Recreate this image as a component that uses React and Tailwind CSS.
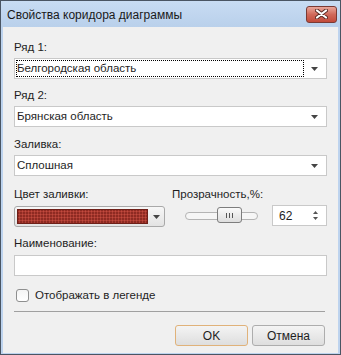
const Arrow = () => (
  <svg width="7" height="4" viewBox="0 0 7 4" className="shrink-0">
    <path d="M0 0h7L3.5 4z" fill="#444" />
  </svg>
);

const Combo = ({ text, focused }) => (
  <div className="h-[21px] bg-white border border-[#c9c9c9] flex items-center pl-[1px] pr-[8px]">
    <div
      className={`flex-1 h-[17px] flex items-center ${
        focused ? "border border-dotted border-black" : "border border-transparent"
      }`}
    >
      {text}
    </div>
    <div className="w-[14px] flex justify-end">
      <Arrow />
    </div>
  </div>
);

const Label = ({ children, className = "" }) => (
  <div className={`h-[16px] leading-[16px] text-[#1e1e1e] ${className}`}>{children}</div>
);

export default function App() {
  return (
    <div
      className="w-[341px] h-[355px] border border-[#4a5563] bg-[#bdd3ee] flex flex-col text-[11.5px] text-[#1e1e1e]"
      style={{ fontFamily: '"Liberation Sans", Arial, sans-serif' }}
    >
      {/* title bar */}
      <div className="h-[26px] shrink-0 flex items-center pl-[6px] pr-[3px] bg-gradient-to-b from-[#c8dcf3] to-[#b9d0eb]">
        <div className="flex-1 text-[12px] leading-none pt-[1px] text-[#1a1a1a]">Свойства коридора диаграммы</div>
        <div className="w-[31px] h-[17px] rounded-[3px] border border-[#7a3a34] bg-gradient-to-b from-[#e8a69a] via-[#d1695a] to-[#c24a3a] flex items-center justify-center">
          <svg width="13" height="10" viewBox="0 0 13 10">
            <path d="M2 1.5l9 7M11 1.5l-9 7" stroke="#5a2a24" strokeWidth="4" strokeLinecap="round" />
            <path d="M2 1.5l9 7M11 1.5l-9 7" stroke="#fff" strokeWidth="2.2" strokeLinecap="round" />
          </svg>
        </div>
      </div>

      {/* body */}
      <div className="flex-1 mx-[2px] mb-[1px] bg-[#f0f0f0] px-[11px] pt-[12px] flex flex-col">
        <Label>Ряд 1:</Label>
        <div className="mt-[3px]">
          <Combo text="Белгородская область" focused />
        </div>

        <Label className="mt-[8px]">Ряд 2:</Label>
        <div className="mt-[3px]">
          <Combo text="Брянская область" />
        </div>

        <Label className="mt-[9px]">Заливка:</Label>
        <div className="mt-[3px]">
          <Combo text="Сплошная" />
        </div>

        <div className="mt-[10px] flex">
          <div className="w-[152px] flex flex-col">
            <Label>Цвет заливки:</Label>
            <div className="mt-[4px] h-[21px] rounded-[3px] border border-[#a9a9a9] bg-gradient-to-b from-[#f7f7f7] to-[#e3e3e3] flex items-center pl-[2px]">
              <div className="w-[131px] h-[15px] border border-[#6e1f18] bg-[#8e2a22] bg-[radial-gradient(#c24a3e_45%,transparent_50%)] bg-[length:3px_3px]" />
              <div className="flex-1 flex justify-center">
                <Arrow />
              </div>
            </div>
          </div>
          <div className="flex-1 pl-[7px] flex flex-col">
            <Label>Прозрачность,%:</Label>
            <div className="mt-[3px] flex items-center">
              <div className="ml-[13px] w-[73px] h-[21px] relative flex items-center">
                <div className="w-full h-[8px] rounded-full border border-[#b4b4b4] bg-[#f6f6f6]" />
                <div className="absolute left-[32px] top-[2px] w-[25px] h-[16px] rounded-[3px] border border-[#7d7d7d] bg-gradient-to-b from-[#fafafa] to-[#dedede] flex items-center justify-center gap-[2px]">
                  <div className="w-px h-[5px] bg-[#555]" />
                  <div className="w-px h-[5px] bg-[#555]" />
                  <div className="w-px h-[5px] bg-[#555]" />
                </div>
              </div>
              <div className="ml-[14px] w-[55px] h-[21px] bg-white border border-[#c9c9c9] flex items-center pl-[6px] pr-[8px]">
                <span className="flex-1 text-[12px]">62</span>
                <div className="flex flex-col gap-[3px]">
                  <svg width="5" height="3" viewBox="0 0 5 3">
                    <path d="M0 3h5L2.5 0z" fill="#555" />
                  </svg>
                  <svg width="5" height="3" viewBox="0 0 5 3">
                    <path d="M0 0h5L2.5 3z" fill="#555" />
                  </svg>
                </div>
              </div>
            </div>
          </div>
        </div>

        <Label className="mt-[8px]">Наименование:</Label>
        <div className="mt-[4px] h-[21px] bg-white border border-[#c9c9c9]" />

        <div className="mt-[11px] flex items-center gap-[6px] pl-[2px]">
          <div className="w-[13px] h-[13px] rounded-[3px] border border-[#8e8f8f] bg-gradient-to-b from-[#f4f4f4] to-[#ffffff]" />
          <span className="leading-[16px]">Отображать в легенде</span>
        </div>

        <div className="mt-[8px] h-px bg-[#a0a0a0] mr-[2px]" />

        <div className="mt-[13px] flex justify-end gap-[4px] pr-[2px]">
          <button className="w-[73px] h-[21px] rounded-[3px] border border-[#e0b27a] bg-gradient-to-b from-[#f4f4f4] to-[#dedede] text-[12px] leading-none">
            OK
          </button>
          <button className="w-[73px] h-[21px] rounded-[3px] border border-[#adadad] bg-gradient-to-b from-[#f4f4f4] to-[#dedede] text-[12px] leading-none">
            Отмена
          </button>
        </div>
      </div>
    </div>
  );
}
